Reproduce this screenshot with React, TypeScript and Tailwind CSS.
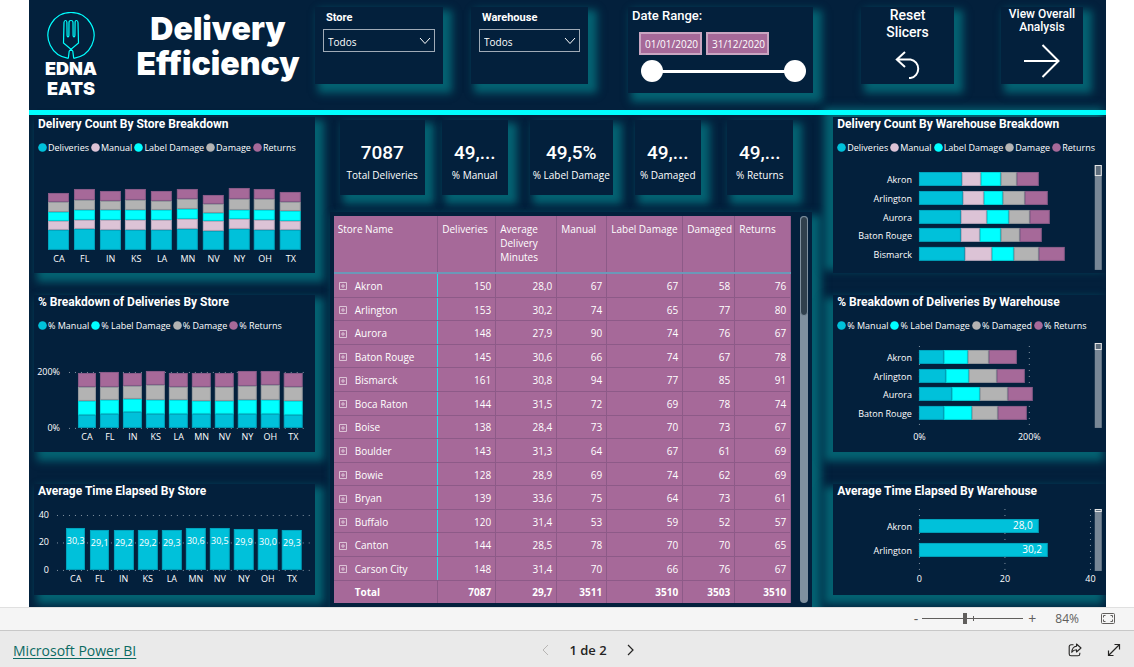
import { useState, type ReactNode } from "react";

const TEAL = "#00c1da";
const LILAC = "#dcc3d6";
const CYAN = "#00ffff";
const GREY = "#b3b3b3";
const PLUM = "#a66999";
const NAVY = "#03203c";

const COUNT_COLORS = [TEAL, LILAC, CYAN, GREY, PLUM];
const PERCENT_COLORS = [TEAL, CYAN, GREY, PLUM];

const STATES = ["CA", "FL", "IN", "KS", "LA", "MN", "NV", "NY", "OH", "TX"];

// Bar segments per state, bottom to top.
const STATE_COUNTS = [
  [696, 302, 336, 348, 290],
  [719, 336, 348, 348, 360],
  [708, 348, 348, 313, 348],
  [708, 348, 336, 360, 360],
  [708, 336, 348, 313, 360],
  [719, 360, 336, 348, 371],
  [673, 325, 278, 336, 313],
  [719, 348, 336, 360, 383],
  [708, 348, 336, 394, 325],
  [696, 325, 348, 313, 348],
];

const STATE_PERCENTS = [
  [48, 50, 50, 47],
  [51, 49, 48, 51],
  [56, 49, 45, 48],
  [51, 50, 53, 51],
  [51, 48, 48, 51],
  [49, 48, 51, 49],
  [50, 47, 51, 49],
  [51, 49, 50, 54],
  [51, 50, 53, 51],
  [48, 50, 49, 48],
];

const STATE_MINUTES = [30.3, 29.1, 29.2, 29.2, 29.3, 30.6, 30.5, 29.9, 30.0, 29.3];

type Row = [string, number, number, number, number, number, number];

const ROWS: Row[] = [
  ["Akron", 150, 28.0, 67, 67, 58, 76],
  ["Arlington", 153, 30.2, 74, 65, 77, 80],
  ["Aurora", 148, 27.9, 90, 74, 76, 67],
  ["Baton Rouge", 145, 30.6, 66, 74, 67, 78],
  ["Bismarck", 161, 30.8, 94, 77, 85, 91],
  ["Boca Raton", 144, 31.5, 72, 69, 78, 74],
  ["Boise", 138, 28.4, 73, 70, 73, 67],
  ["Boulder", 143, 31.3, 64, 67, 61, 69],
  ["Bowie", 128, 28.9, 69, 74, 62, 69],
  ["Bryan", 139, 33.6, 75, 64, 73, 61],
  ["Buffalo", 120, 31.4, 53, 59, 52, 57],
  ["Canton", 144, 28.5, 78, 70, 70, 65],
  ["Carson City", 148, 31.4, 70, 66, 76, 67],
];

const COLUMNS = [
  { label: "Store Name", width: "w-[104px]" },
  { label: "Deliveries", width: "w-[58px]" },
  { label: "Average Delivery Minutes", width: "w-[61px]" },
  { label: "Manual", width: "w-[50px]" },
  { label: "Label Damage", width: "w-[76px]" },
  { label: "Damaged", width: "w-[52px]" },
  { label: "Returns", width: "w-[56px]" },
];

const KPIS = [
  { value: "7087", label: "Total Deliveries", box: "w-[85px]" },
  { value: "49,...", label: "% Manual", box: "ml-[17px] w-[66px]" },
  { value: "49,5%", label: "% Label Damage", box: "ml-[22px] w-[83px]" },
  { value: "49,...", label: "% Damaged", box: "ml-[22px] w-[66px]" },
  { value: "49,...", label: "% Returns", box: "ml-[26px] w-[66px]" },
];

const decimal = (n: number) => n.toFixed(1).replace(".", ",");

const GLOW = "bg-[#03203c] shadow-[6px_6px_8px_3px_#046272]";
const GLOW_LEFT = "bg-[#03203c] shadow-[-6px_6px_8px_3px_#046272]";
const GLOW_UP_LEFT = "bg-[#03203c] shadow-[-6px_-6px_8px_3px_#046272]";
const DIN = "font-['Roboto',sans-serif]";

function Segment(p: { x: number; y: number; w: number; h: number; fill: string }) {
  const left = Math.round(p.x);
  const top = Math.round(p.y);
  const w = Math.round(p.x + p.w) - left;
  const h = Math.round(p.y + p.h) - top;
  return (
    <g>
      <rect x={left} y={top} width={w} height={h} fill={p.fill} />
      <rect
        x={left + 0.5}
        y={top + 0.5}
        width={w - 1}
        height={h - 1}
        fill="none"
        stroke={NAVY}
        strokeOpacity={0.18}
      />
    </g>
  );
}

function GridLine(p: { x1: number; y1: number; x2: number; y2: number }) {
  return <line {...p} stroke="#8796a5" strokeDasharray="1 5" />;
}

function Label(p: { x: number; y: number; anchor?: "start" | "middle" | "end"; children: ReactNode; big?: boolean }) {
  return (
    <text x={p.x} y={p.y} textAnchor={p.anchor ?? "middle"} fill="#ffffff" className={p.big ? "text-[10px]" : "text-[9px]"}>
      {p.children}
    </text>
  );
}

function Scroller(p: { y: number; h: number; thumb: number }) {
  return (
    <g>
      <rect x={262} y={p.y} width={7} height={p.h} fill="#788796" />
      <rect x={262.5} y={p.y + 0.5} width={6} height={p.thumb} fill="#5d6c7b" stroke="#e6e6e6" />
    </g>
  );
}

function Legend({ items, colors }: { items: string[]; colors: string[] }) {
  return (
    <ul className="mt-2 flex h-[15px] items-center gap-[2px] pl-1 text-[9px] leading-[15px] whitespace-nowrap">
      {items.map((item, i) => (
        <li key={item} className="flex items-center gap-px">
          <svg viewBox="0 0 9 9" className="size-[9px]" aria-hidden="true">
            <circle cx="4.5" cy="4.5" r="4.3" fill={colors[i]} />
          </svg>
          {item}
        </li>
      ))}
    </ul>
  );
}

function ChartCard({ title, glow, children }: { title: string; glow: string; children: ReactNode }) {
  return (
    <section className={glow}>
      <h2 className={`pl-1 text-[12px] leading-[15px] font-bold whitespace-nowrap ${DIN}`}>{title}</h2>
      {children}
    </section>
  );
}

function StateCountChart() {
  const step = 25.8;
  return (
    <svg viewBox="0 0 281 118" className="block w-full" role="img" aria-label="Delivery count by store">
      {STATES.map((s, i) => {
        const x = 14 + i * step;
        let y = 95;
        return (
          <g key={s}>
            {STATE_COUNTS[i].map((v, k) => {
              const h = v * 0.0287;
              y -= h;
              return <Segment key={k} x={x} y={y} w={21} h={h} fill={COUNT_COLORS[k]} />;
            })}
            <Label x={x + 11} y={107}>{s}</Label>
          </g>
        );
      })}
    </svg>
  );
}

function StatePercentChart() {
  return (
    <svg viewBox="0 0 281 119" className="block w-full" role="img" aria-label="Percent breakdown by store">
      <GridLine x1={35} y1={39.5} x2={274} y2={39.5} />
      <GridLine x1={35} y1={95.5} x2={274} y2={95.5} />
      <Label x={26} y={42} anchor="end">200%</Label>
      <Label x={26} y={98} anchor="end">0%</Label>
      {STATES.map((s, i) => {
        const x = 43.5 + i * 22.95;
        let y = 95;
        return (
          <g key={s}>
            {STATE_PERCENTS[i].map((v, k) => {
              const h = v * 0.28;
              y -= h;
              return <Segment key={k} x={x} y={y} w={18.5} h={h} fill={PERCENT_COLORS[k]} />;
            })}
            <Label x={x + 9.5} y={107}>{s}</Label>
          </g>
        );
      })}
    </svg>
  );
}

function StateTimeChart() {
  return (
    <svg viewBox="0 0 281 96" className="block w-full" role="img" aria-label="Average time elapsed by store">
      {[40, 20, 0].map((v) => (
        <g key={v}>
          <GridLine x1={23} y1={71.5 - v * 1.375} x2={278} y2={71.5 - v * 1.375} />
          <Label x={15} y={74 - v * 1.375} anchor="end">{v}</Label>
        </g>
      ))}
      {STATES.map((s, i) => {
        const h = STATE_MINUTES[i] * 1.375;
        const x = 32 + i * 24.05;
        return (
          <g key={s}>
            <Segment x={x} y={71 - h} w={19.4} h={h} fill={TEAL} />
            <Label x={x + 9.75} y={87 - h}>{decimal(STATE_MINUTES[i])}</Label>
            <Label x={x + 9.75} y={83}>{s}</Label>
          </g>
        );
      })}
    </svg>
  );
}

function WarehouseCountChart() {
  return (
    <svg viewBox="0 0 273 118" className="block w-full" role="img" aria-label="Delivery count by warehouse">
      {ROWS.slice(0, 5).map((r, i) => {
        const y = 17.3 + i * 18.7;
        let x = 86;
        return (
          <g key={r[0]}>
            <Label x={79} y={y + 11} anchor="end">{r[0]}</Label>
            {[r[1], r[3], r[4], r[5], r[6]].map((v, k) => {
              const w = v * 0.287;
              const left = x;
              x += w;
              return <Segment key={k} x={left} y={y} w={w} h={14} fill={COUNT_COLORS[k]} />;
            })}
          </g>
        );
      })}
      <Scroller y={10} h={105} thumb={10} />
    </svg>
  );
}

function WarehousePercentChart() {
  return (
    <svg viewBox="0 0 273 119" className="block w-full" role="img" aria-label="Percent breakdown by warehouse">
      <GridLine x1={86.5} y1={13} x2={86.5} y2={96} />
      <GridLine x1={196.5} y1={13} x2={196.5} y2={96} />
      {ROWS.slice(0, 4).map((r, i) => {
        const y = 17 + i * 18.7;
        let x = 86;
        return (
          <g key={r[0]}>
            <Label x={79} y={y + 11} anchor="end">{r[0]}</Label>
            {[r[3], r[4], r[5], r[6]].map((v, k) => {
              const w = (v / r[1]) * 55;
              const left = x;
              x += w;
              return <Segment key={k} x={left} y={y} w={w} h={14} fill={PERCENT_COLORS[k]} />;
            })}
          </g>
        );
      })}
      <Label x={86.5} y={107}>0%</Label>
      <Label x={196.5} y={107}>200%</Label>
      <Scroller y={10} h={85} thumb={6} />
    </svg>
  );
}

function WarehouseTimeChart() {
  return (
    <svg viewBox="0 0 273 96" className="block w-full" role="img" aria-label="Average time elapsed by warehouse">
      {[0, 20, 40].map((v) => (
        <g key={v}>
          <GridLine x1={86.5 + v * 4.28} y1={10} x2={86.5 + v * 4.28} y2={72} />
          <Label x={86.5 + v * 4.28} y={83}>{v}</Label>
        </g>
      ))}
      {ROWS.slice(0, 2).map((r, i) => {
        const y = 19.5 + i * 24;
        const w = r[2] * 4.28;
        return (
          <g key={r[0]}>
            <Segment x={86} y={y} w={w} h={14} fill={TEAL} />
            <Label x={79} y={y + 12} anchor="end">{r[0]}</Label>
            <Label x={80 + w} y={y + 11} anchor="end" big>{decimal(r[2])}</Label>
          </g>
        );
      })}
      <Scroller y={10} h={62} thumb={2} />
    </svg>
  );
}

function Logo() {
  return (
    <div className="flex w-[84px] flex-col items-center pt-3 font-['Inter',sans-serif] text-[18px] leading-5 font-black">
      <svg viewBox="0 0 50 47" className="h-[47px] w-[50px]" fill="none" stroke={CYAN} strokeWidth="1.2" aria-hidden="true">
        <path d="M22.3 46.3A23 23 0 1 1 27.7 46.3" />
        <path d="M22.3 46.3 23.2 39.2 25 37.2 17.5 31 18 10.500Q18.1 8.5 19.6 8.5 20.9 8.5 20.9 10.5L21.1 23.5Q21.2 24.8 22 24.8 22.8 24.8 22.9 23.5L23 10.500Q23 8.5 25 8.5 27 8.5 27 10.5L27.1 23.5Q27.2 24.8 28 24.8 28.8 24.8 28.9 23.5L29.1 10.5Q29.1 8.5 30.4 8.5 31.9 8.5 32 10.500L32.5 31 25 37.2 26.8 39.2 27.7 46.3" />
      </svg>
      <span>EDNA</span>
      <span>EATS</span>
    </div>
  );
}

function Slicer({ id, label, box, field }: { id: string; label: string; box: string; field: string }) {
  return (
    <div className={`h-[77px] shrink-0 pl-2 ${GLOW} ${box}`}>
      <label htmlFor={id} className={`block pt-1 pl-[3px] text-[11px] leading-[14px] font-bold ${DIN}`}>
        {label}
      </label>
      <div className={`relative mt-1 ${field}`}>
        <select
          id={id}
          className="block h-[23px] w-full appearance-none border border-[#a0abb7] bg-transparent pt-[3px] pl-1 text-[10px] text-white"
        >
          <option>Todos</option>
        </select>
        <svg viewBox="0 0 12 8" className="pointer-events-none absolute top-2 right-1 h-2 w-3" fill="none" stroke="#fff" aria-hidden="true">
          <path d="M1 1 6 6.5 11 1" />
        </svg>
      </div>
    </div>
  );
}

const THUMB =
  "pointer-events-none col-start-1 row-start-1 h-[22px] w-full appearance-none bg-transparent [&::-webkit-slider-thumb]:pointer-events-auto [&::-webkit-slider-thumb]:size-[22px] [&::-webkit-slider-thumb]:appearance-none [&::-webkit-slider-thumb]:rounded-full [&::-webkit-slider-thumb]:bg-white";

function DateRange() {
  const [from, setFrom] = useState(0);
  const [to, setTo] = useState(365);
  const field = "h-[23px] w-[63px] border-2 border-[#c9a5c1] bg-[#a66999] pl-1 text-[10px] text-white";
  return (
    <fieldset className={`ml-[40px] h-[86px] w-[185px] shrink-0 pl-1 ${GLOW}`}>
      <legend className={`float-left w-full text-[13px] leading-[18px] font-medium ${DIN}`}>Date Range:</legend>
      <div className="clear-both flex gap-1 pt-[7px] pl-[7px]">
        <input aria-label="Start date" defaultValue="01/01/2020" className={field} />
        <input aria-label="End date" defaultValue="31/12/2020" className={field} />
      </div>
      <div className="mt-[5px] ml-[9px] grid w-[165px] items-center">
        <div className="col-start-1 row-start-1 mx-2 h-[3px] bg-white" />
        <input type="range" aria-label="Range start" min={0} max={365} value={from} onChange={(e) => setFrom(Number(e.target.value))} className={THUMB} />
        <input type="range" aria-label="Range end" min={0} max={365} value={to} onChange={(e) => setTo(Number(e.target.value))} className={THUMB} />
      </div>
    </fieldset>
  );
}

function Header() {
  return (
    <header className="flex h-[110px] items-start">
      <Logo />
      <h1 className="flex-1 pt-[11px] pl-2 text-center font-['Inter',sans-serif] text-[32px] leading-[35px] font-black">
        Delivery
        <br />
        Efficiency
      </h1>
      <div className="flex pt-[7px] pr-[23px]">
        <Slicer id="store" label="Store" box="w-[128px]" field="w-[112px]" />
        <Slicer id="warehouse" label="Warehouse" box="ml-[28px] w-[117px]" field="w-[101px]" />
        <DateRange />
        <button type="button" className={`ml-[48px] flex h-[77px] w-[93px] shrink-0 flex-col items-center text-[14px] leading-[17px] font-medium ${GLOW} ${DIN}`}>
          <span>Reset</span>
          <span>Slicers</span>
          <svg viewBox="0 0 26 30" className="mt-[9px] h-[30px] w-[26px]" fill="none" stroke="#fff" strokeWidth="2" aria-hidden="true">
            <path d="M10 2 1.8 9.5 10 17M1.8 9.5H15.5A9.4 9.4 0 0 1 15.5 28H14" />
          </svg>
        </button>
        <button type="button" className={`ml-[47px] flex h-[77px] w-[82px] shrink-0 flex-col items-center pt-px text-[12px] leading-[13px] font-medium whitespace-nowrap ${GLOW} ${DIN}`}>
          <span>View Overall</span>
          <span>Analysis</span>
          <svg viewBox="0 0 36 34" className="mt-[10px] h-[34px] w-[36px]" fill="none" stroke="#fff" strokeWidth="2" aria-hidden="true">
            <path d="M0 17H34.5M18.5 1 34.5 17 18.5 33" />
          </svg>
        </button>
      </div>
    </header>
  );
}

function StoreTable() {
  const cell = "border-r border-b border-[#8d5a88] pt-[2px] pr-1 text-right align-middle";
  return (
    <table className="h-[387px] w-full table-fixed border-collapse bg-[#a66999] text-[10px] leading-[13px]">
      <thead>
        <tr className="h-[57px]">
          {COLUMNS.map((c) => (
            <th
              key={c.label}
              className={`border-r border-b-2 border-r-[#8d5a88] border-b-[#6c98b8] pt-[6px] pr-0 pl-1 text-left align-top leading-[14px] font-normal ${c.width}`}
            >
              {c.label}
            </th>
          ))}
        </tr>
      </thead>
      <tbody>
        {ROWS.map((r) => (
          <tr key={r[0]}>
            <th className="border-r border-b border-r-[#18e3ee] border-b-[#8d5a88] pt-[2px] pl-[5px] text-left font-normal">
              <div className="flex items-center gap-2">
                <button type="button" aria-label={`Expand ${r[0]}`}>
                  <svg viewBox="0 0 8 8" className="size-2" fill="none" stroke="#dcc3d6" aria-hidden="true">
                    <path d="M.5.5h7v7h-7zM2 4h4M4 2v4" />
                  </svg>
                </button>
                {r[0]}
              </div>
            </th>
            {r.slice(1).map((v, i) => (
              <td key={i} className={cell}>
                {i === 1 ? decimal(v as number) : v}
              </td>
            ))}
          </tr>
        ))}
        <tr className="font-bold">
          <th className="border-r border-r-[#8d5a88] pt-[2px] pl-[21px] text-left">Total</th>
          {["7087", "29,7", "3511", "3510", "3503", "3510"].map((v, i) => (
            <td key={i} className="border-r border-[#8d5a88] pt-[2px] pr-1 text-right">
              {v}
            </td>
          ))}
        </tr>
      </tbody>
    </table>
  );
}

function StatusBar() {
  return (
    <div className="flex h-6 items-center justify-end border-t border-b border-t-[#e0e0e0] border-b-[#c8c8c8] bg-[#f5f5f5] pr-[19px] text-[#605e5c]">
      <button type="button" aria-label="Zoom out" className="text-[14px] leading-none">-</button>
      <div className="relative mx-1 flex w-[101px] items-center">
        <span className="absolute left-1/2 h-[5px] w-px bg-[#605e5c]" />
        <input
          type="range"
          aria-label="Zoom"
          defaultValue={42}
          className="h-px w-full appearance-none bg-[#605e5c] [&::-webkit-slider-thumb]:h-[11px] [&::-webkit-slider-thumb]:w-1 [&::-webkit-slider-thumb]:appearance-none [&::-webkit-slider-thumb]:bg-[#605e5c]"
        />
      </div>
      <button type="button" aria-label="Zoom in" className="pl-px text-[14px] leading-none">+</button>
      <span className="ml-[19px] text-[12px]">84%</span>
      <button type="button" aria-label="Fit to page" className="ml-[22px]">
        <svg viewBox="0 0 14 11" className="h-[11px] w-[14px]" fill="none" stroke="#605e5c" aria-hidden="true">
          <rect x=".5" y=".5" width="13" height="10" rx="1" />
          <path d="M2.5 4.5V2.5H4.5M9.5 2.5H11.5V4.5M11.5 6.5V8.5H9.5M4.5 8.5H2.5V6.5" />
        </svg>
      </button>
    </div>
  );
}

function Footer() {
  return (
    <footer className="grid flex-1 grid-cols-3 items-center bg-[#eaeaea] px-[13px] pt-[3px] text-[#252423]">
      <a href="#powerbi" className="justify-self-start text-[14px] text-[#0b6a63] underline underline-offset-2">
        Microsoft Power BI
      </a>
      <nav className="flex items-center gap-[20px] justify-self-center pl-[42px] text-[13px]" aria-label="Pages">
        <button type="button" aria-label="Previous page">
          <svg viewBox="0 0 7 12" className="h-3 w-[7px]" fill="none" stroke="#b8b6b4" aria-hidden="true">
            <path d="M6 1 1 6 6 11" />
          </svg>
        </button>
        <span className="font-semibold">1 de 2</span>
        <button type="button" aria-label="Next page">
          <svg viewBox="0 0 7 12" className="h-3 w-[7px]" fill="none" stroke="#252423" strokeWidth="1.2" aria-hidden="true">
            <path d="M1 1 6 6 1 11" />
          </svg>
        </button>
      </nav>
      <div className="flex gap-[25px] justify-self-end">
        <button type="button" aria-label="Share">
          <svg viewBox="0 0 14 14" className="size-[14px]" fill="none" stroke="#252423" strokeWidth="1.1" strokeLinejoin="round" aria-hidden="true">
            <path d="M5.5 1.8H3A1.8 1.8 0 0 0 1.2 3.6V11A1.8 1.8 0 0 0 3 12.8H10A1.8 1.8 0 0 0 11.8 11V9.8" />
            <path d="M8.5 1 13 5 8.5 9V6.8C6.3 6.8 5 7.5 3.8 9.3 4 5.6 5.6 3.5 8.5 3.2Z" />
          </svg>
        </button>
        <button type="button" aria-label="Full screen">
          <svg viewBox="0 0 14 14" className="size-[14px]" fill="none" stroke="#252423" strokeWidth="1.2" aria-hidden="true">
            <path d="M1.5 12.5 12.5 1.5M7.5 1.5H12.5V6.5M1.5 7.5V12.5H6.5" />
          </svg>
        </button>
      </div>
    </footer>
  );
}

export default function App() {
  return (
    <div className="flex min-h-screen flex-col bg-white font-['Open_Sans','Noto_Sans',sans-serif]">
      <main className="mr-[28px] ml-[29px] overflow-hidden bg-[#03203c] text-white">
        <Header />
        <div className="relative z-10 h-[5px] bg-[#00ffff]" />
        <div className="grid grid-cols-[281fr_482fr_273fr] pl-[5px] [column-gap:18px]">
          <div className="flex flex-col pt-[2px] pb-3">
            <ChartCard title="Delivery Count By Store Breakdown" glow={GLOW}>
              <Legend items={["Deliveries", "Manual", "Label Damage", "Damage", "Returns"]} colors={COUNT_COLORS} />
              <StateCountChart />
            </ChartCard>
            <div className="h-[22px]" />
            <ChartCard title="% Breakdown of Deliveries By Store" glow={GLOW}>
              <Legend items={["% Manual", "% Label Damage", "% Damage", "% Returns"]} colors={PERCENT_COLORS} />
              <StatePercentChart />
            </ChartCard>
            <div className="h-8" />
            <ChartCard title="Average Time Elapsed By Store" glow={GLOW}>
              <StateTimeChart />
            </ChartCard>
          </div>

          <div className="mr-[3px] -ml-[3px] flex flex-col pt-[5px]">
            <div className="flex pl-[10px]">
              {KPIS.map((k) => (
                <div key={k.label} className={`flex h-[75px] shrink-0 flex-col items-center pt-[21px] whitespace-nowrap ${GLOW} ${k.box}`}>
                  <span className={`text-[19px] leading-[24px] font-medium ${DIN}`}>{k.value}</span>
                  <span className="mt-[3px] text-[10px] leading-[14px]">{k.label}</span>
                </div>
              ))}
            </div>
            <div className={`mt-[17px] flex flex-1 items-start gap-[9px] pt-1 pr-1 pl-[4px] ${GLOW}`}>
              <StoreTable />
              <div className="h-[387px] w-2 shrink-0 rounded-full bg-[#7f909f]">
                <div className="h-[100px] rounded-full border border-[#7f909f] bg-[#30404d]" />
              </div>
            </div>
          </div>

          <div className="flex flex-col pt-[2px] pb-3">
            <ChartCard title="Delivery Count By Warehouse Breakdown" glow={GLOW_UP_LEFT}>
              <Legend items={["Deliveries", "Manual", "Label Damage", "Damage", "Returns"]} colors={COUNT_COLORS} />
              <WarehouseCountChart />
            </ChartCard>
            <div className="h-[22px]" />
            <ChartCard title="% Breakdown of Deliveries By Warehouse" glow={GLOW_LEFT}>
              <Legend items={["% Manual", "% Label Damage", "% Damaged", "% Returns"]} colors={PERCENT_COLORS} />
              <WarehousePercentChart />
            </ChartCard>
            <div className="h-8" />
            <ChartCard title="Average Time Elapsed By Warehouse" glow={GLOW_LEFT}>
              <WarehouseTimeChart />
            </ChartCard>
          </div>
        </div>
      </main>
      <StatusBar />
      <Footer />
    </div>
  );
}
